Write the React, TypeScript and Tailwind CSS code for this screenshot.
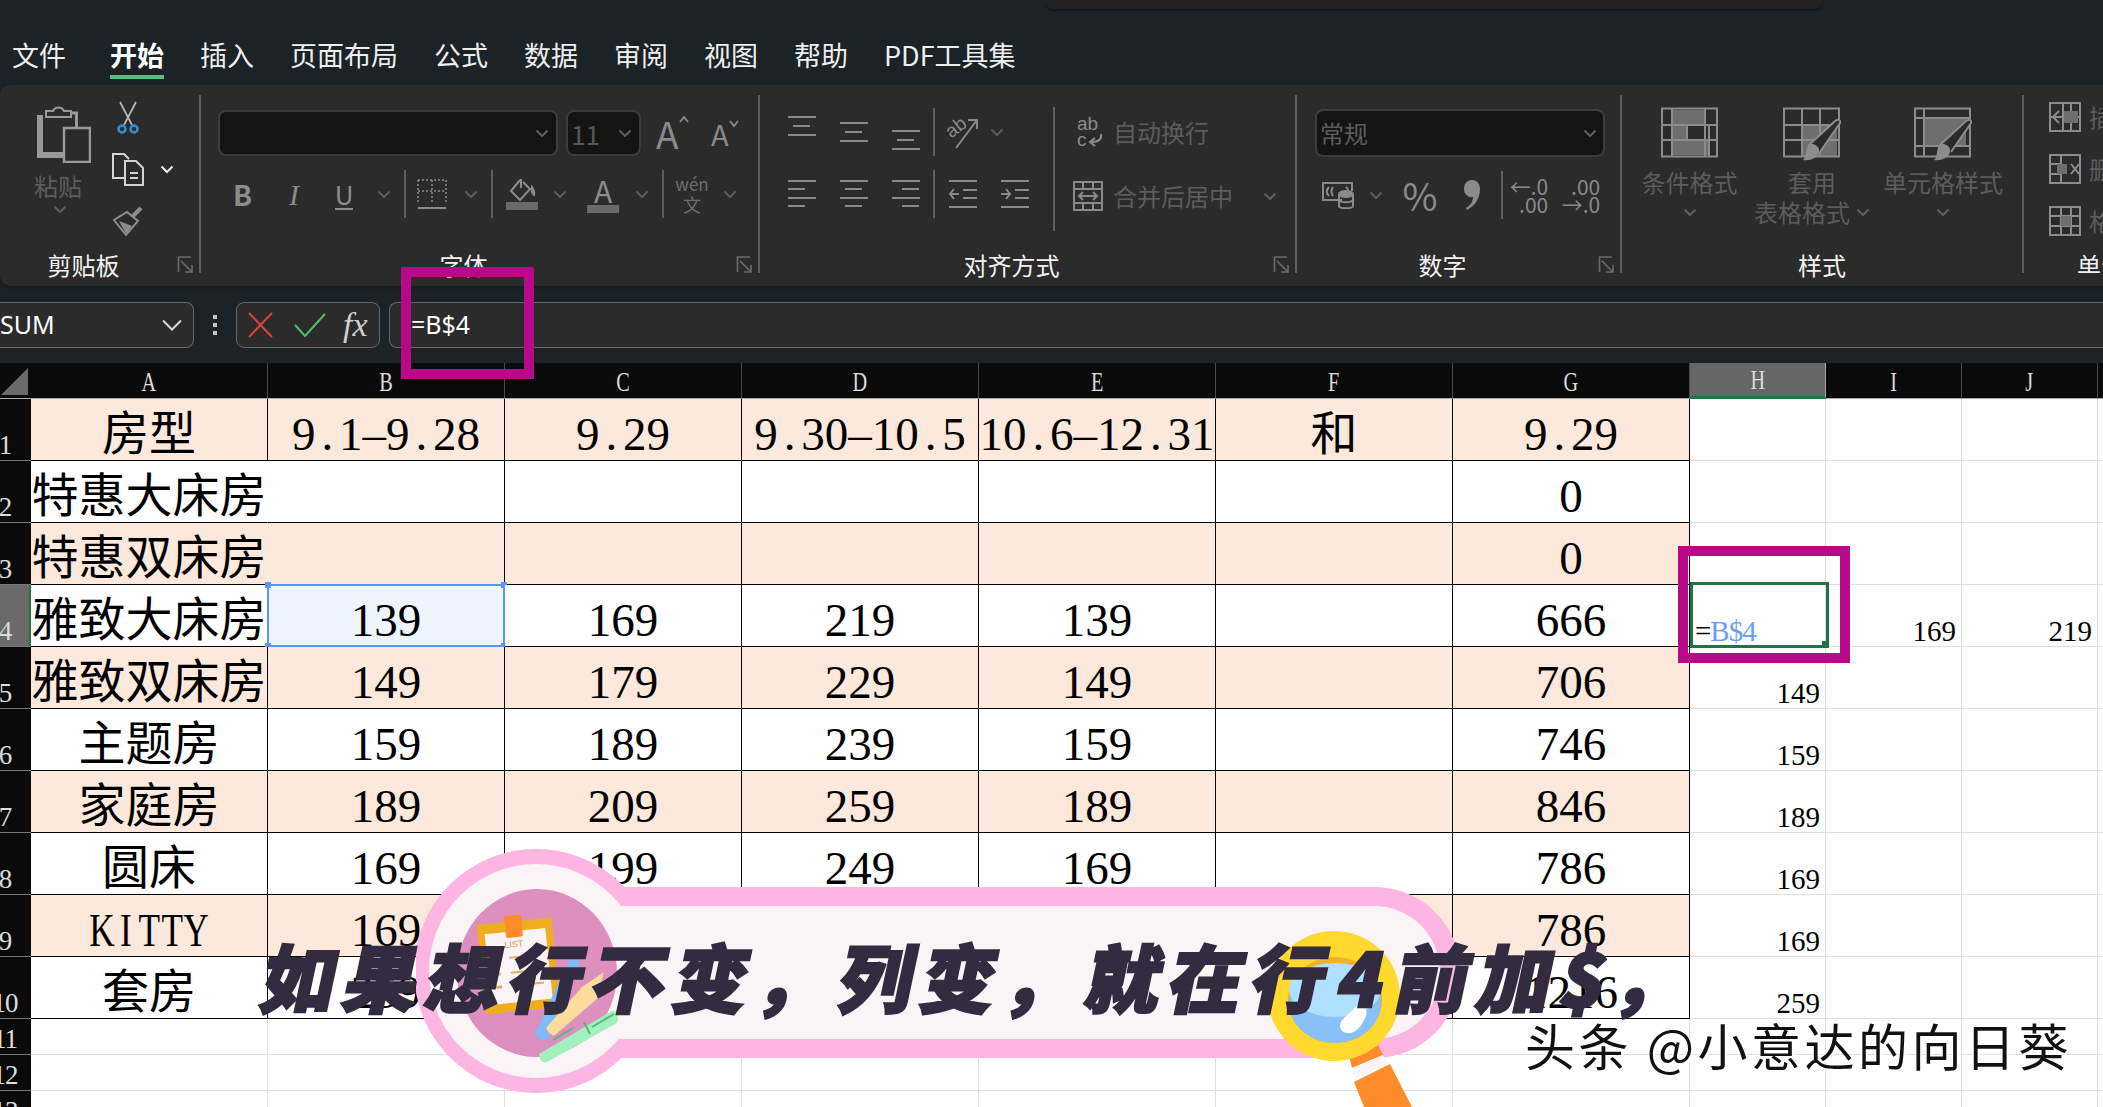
import React from 'react';

const tabs = ['文件', '开始', '插入', '页面布局', '公式', '数据', '审阅', '视图', '帮助', 'PDF工具集'];
const columns = ['A', 'B', 'C', 'D', 'E', 'F', 'G', 'H', 'I', 'J', ''];

interface Row {
  n: number;
  tint: boolean;
  cells: string[];
  side?: string;
}

const rows: Row[] = [
  { n: 1, tint: true, cells: ['房型', '9.1–9.28', '9.29', '9.30–10.5', '10.6–12.31', '和', '9.29'] },
  { n: 2, tint: false, cells: ['特惠大床房', '', '', '', '', '', '0'] },
  { n: 3, tint: true, cells: ['特惠双床房', '', '', '', '', '', '0'] },
  { n: 4, tint: false, cells: ['雅致大床房', '139', '169', '219', '139', '', '666'] },
  { n: 5, tint: true, cells: ['雅致双床房', '149', '179', '229', '149', '', '706'], side: '149' },
  { n: 6, tint: false, cells: ['主题房', '159', '189', '239', '159', '', '746'], side: '159' },
  { n: 7, tint: true, cells: ['家庭房', '189', '209', '259', '189', '', '846'], side: '189' },
  { n: 8, tint: false, cells: ['圆床', '169', '199', '249', '169', '', '786'], side: '169' },
  { n: 9, tint: true, cells: ['KITTY', '169', '199', '249', '169', '', '786'], side: '169' },
  { n: 10, tint: false, cells: ['套房', '259', '299', '399', '259', '', '1216'], side: '259' },
];

const Chev = ({ className = 'text-[#5e5e5e]' }: { className?: string }) => (
  <svg className={className} width="14" height="9" viewBox="0 0 14 9" fill="none">
    <path d="M1.5 1.5 7 7l5.5-5.5" stroke="currentColor" strokeWidth="2" />
  </svg>
);

const Slot = ({ className, children }: { className: string; children?: React.ReactNode }) => (
  <div className={`flex shrink-0 items-center justify-center ${className}`}>{children}</div>
);

const Sep = () => <div className="h-[48px] w-[2px] shrink-0 bg-[#5e5e5e]" />;

const Expander = () => (
  <svg className="absolute right-[6px] top-[6px]" width="16" height="18" viewBox="0 0 16 18" fill="none" stroke="#6a6a6a" strokeWidth="1.6">
    <path d="M14 1H1.5v15" />
    <path d="M4 5l10 10M15 9v7H8" />
  </svg>
);

// one group of the ribbon, the line on the right is its border
const Group = ({ className, label, more, children }: { className: string; label: string; more?: boolean; children: React.ReactNode }) => (
  <div className={`h-[178px] shrink-0 border-r-2 border-[#5e5e5e] ${className}`}>
    <div className="flex h-[155px] flex-col">{children}</div>
    <div className="relative h-[30px] text-center text-[24px] leading-[30px] text-[#f2f2f2]">
      <span className={more ? 'pr-[32px]' : ''}>{label}</span>
      {more && <Expander />}
    </div>
  </div>
);

const AlignLines = ({ kind }: { kind: 'left' | 'center' | 'right' }) => {
  const short = kind === 'left' ? 'M1 10h17M1 27h17' : kind === 'center' ? 'M6 10h17M6 27h17' : 'M11 10h17M11 27h17';
  return (
    <svg width="29" height="30" viewBox="0 0 29 30" stroke="#8a8a8a" strokeWidth="2">
      <path d="M1 2h28M1 19h28" />
      <path d={short} />
    </svg>
  );
};

const VAlign = ({ className }: { className: string }) => (
  <svg className={className} width="29" height="20" viewBox="0 0 29 20" stroke="#8a8a8a" strokeWidth="2">
    <path d="M1 1h28M6 10h17M1 19h28" />
  </svg>
);

const Indent = ({ out }: { out?: boolean }) => (
  <svg width="30" height="30" viewBox="0 0 30 30" fill="none" stroke="#8a8a8a" strokeWidth="2">
    <path d="M1 2h28M1 28h28M15 11h14M15 19h14" />
    {out ? <path d="M11 15H2M6 10l-4 5 4 5" /> : <path d="M1 15h9M6 10l4 5-4 5" />}
  </svg>
);

const StyleGrid = ({ brush, children }: { brush?: boolean; children: React.ReactNode }) => (
  <svg width="60" height="54" viewBox="0 0 60 54" fill="none">
    {children}
    {brush && (
      <>
        <path d="M27 38 52 15c3-3 7-3 6 1L38 45" fill="#2b2b2b" stroke="#8c8c8c" strokeWidth="2" />
        <path d="M27 37c6-1 11 3 10 8-1 6-9 9-16 8 4-3 2-12 6-16Z" fill="#8c8c8c" />
      </>
    )}
  </svg>
);

const CellIcon = ({ children }: { children: React.ReactNode }) => (
  <svg className="shrink-0" width="32" height="30" viewBox="0 0 32 30" fill="none" stroke="#8c8c8c" strokeWidth="2">
    <rect x="1" y="1" width="30" height="28" />
    {children}
  </svg>
);

function Ribbon() {
  return (
    <div className="flex h-[201px] rounded-l-[10px] bg-[#2b2b2b] pt-[10px] shadow-[0_1px_4px_rgba(0,0,0,0.4)]">
      <Group className="w-[201px]" label="剪贴板" more>
        <div className="flex pl-[37px]">
          <div className="flex w-[54px] flex-col items-center">
            <svg className="mt-[8px]" width="54" height="60" viewBox="0 0 54 60" fill="none" stroke="#9a9a9a">
              <path d="M3 12v40h23" strokeWidth="6" />
              <path d="M35 10h4.500v15" strokeWidth="3" />
              <path d="M9 14V8h7a6 6 0 0 1 11 0h7v6Z" strokeWidth="2" fill="#2b2b2b" />
              <rect x="27" y="25" width="26" height="34" strokeWidth="2.500" fill="#2b2b2b" />
            </svg>
            <span className="mt-[8px] ml-[-12px] text-[24px] leading-[30px] text-[#5c5c5c]">粘贴</span>
            <div className="mt-[4px] ml-[-8px]">
              <Chev />
            </div>
          </div>
          <div className="ml-[9px] flex flex-col gap-[5px]">
            <Slot className="h-[46px] w-[56px]">
              <svg width="24" height="34" viewBox="0 0 24 34" fill="none">
                <path d="M4 1l12 23M20 1 8 24" stroke="#b5b5b5" strokeWidth="1.800" />
                <circle cx="6" cy="28" r="3.500" stroke="#2f8fd8" strokeWidth="2.500" />
                <circle cx="18" cy="28" r="3.500" stroke="#2f8fd8" strokeWidth="2.500" />
              </svg>
            </Slot>
            <div className="flex h-[46px] items-center">
              <Slot className="w-[56px]">
                <svg width="33" height="33" viewBox="0 0 33 33" fill="none" stroke="#d4d4d4" strokeWidth="2">
                  <path d="M12 25H1V1h11l5 5" />
                  <path d="M13 8h11l7 7v17H13ZM18 20h8M18 25h8" />
                </svg>
              </Slot>
              <Slot className="w-[22px]">
                <Chev className="text-[#f0f0f0]" />
              </Slot>
            </div>
            <Slot className="h-[46px] w-[56px]">
              <svg width="33" height="31" viewBox="0 0 33 31" fill="none" stroke="#8c8c8c">
                <path d="M20 12l9-9" strokeWidth="4" />
                <path d="M15 7l11 9-12 14L2 15Z" strokeWidth="2" />
                <path d="M7 16l13 5-6 8Z" fill="#8c8c8c" stroke="none" />
              </svg>
            </Slot>
          </div>
        </div>
      </Group>

      <Group className="w-[559px]" label="字体" more>
        <div className="mt-[15px] flex h-[46px] items-center pl-[17px]">
          <div className="flex h-[46px] w-[340px] items-center justify-end rounded-[8px] border-2 border-[#3c3c3c] bg-[#141414] pr-[7px]">
            <Chev />
          </div>
          <div className="ml-[8px] flex h-[46px] w-[75px] items-center justify-between rounded-[8px] border-2 border-[#3c3c3c] bg-[#141414] pl-[3px] pr-[7px] text-[26px] text-[#585858]">
            11
            <Chev />
          </div>
          <div className="ml-[15px] flex w-[30px] items-start text-[37px] leading-[42px] text-[#8a8a8a]">
            A
            <svg className="mt-[3px] shrink-0" width="10" height="8" viewBox="0 0 10 8" fill="none" stroke="#8a8a8a" strokeWidth="1.800">
              <path d="M1 7l4-5 4 5" />
            </svg>
          </div>
          <div className="ml-[25px] flex w-[30px] items-start text-[29px] leading-[42px] text-[#8a8a8a]">
            A
            <svg className="mt-[8px] shrink-0" width="10" height="8" viewBox="0 0 10 8" fill="none" stroke="#8a8a8a" strokeWidth="1.800">
              <path d="M1 1l4 5 4-5" />
            </svg>
          </div>
        </div>
        <div className="mt-[14px] flex h-[48px] items-center pl-[17px]">
          <Slot className="w-[49px] text-[28px] font-bold text-[#8c8c8c]">B</Slot>
          <Slot className="w-[54px] font-['Liberation_Serif',serif] text-[30px] italic text-[#8c8c8c]">I</Slot>
          <Slot className="w-[46px] text-[26px] text-[#8c8c8c]">
            <span className="border-b-2 border-[#8c8c8c] leading-[29px]">U</span>
          </Slot>
          <Slot className="w-[34px]"><Chev /></Slot>
          <Slot className="w-[8px]"><Sep /></Slot>
          <Slot className="w-[46px]">
            <svg width="30" height="30" viewBox="0 0 30 30" fill="none" stroke="#8c8c8c" strokeWidth="1.500">
              <path d="M1 1h28M1 1v23M29 1v23M1 12h28M15 1v23" strokeDasharray="2 2" />
              <path d="M1 29h28" strokeWidth="2" />
            </svg>
          </Slot>
          <Slot className="w-[32px]"><Chev /></Slot>
          <Slot className="w-[10px]"><Sep /></Slot>
          <Slot className="w-[50px]">
            <svg width="32" height="32" viewBox="0 0 32 32" fill="none" stroke="#8c8c8c" strokeWidth="2">
              <path d="M14 2 5 13l9 9 10-11L17 4M15 1v9M26 9c2 3 3 5 2 8-2-2-3-4-2-8Z" />
              <rect x="0" y="24" width="32" height="8" fill="#6a6a6a" stroke="none" />
            </svg>
          </Slot>
          <Slot className="w-[26px]"><Chev /></Slot>
          <Slot className="w-[60px]">
            <div className="flex w-[32px] flex-col items-center text-[30px] leading-[28px] text-[#8c8c8c]">
              A
              <div className="mt-[1px] h-[8px] w-[32px] bg-[#6a6a6a]" />
            </div>
          </Slot>
          <Slot className="w-[18px]"><Chev /></Slot>
          <Slot className="w-[24px]"><Sep /></Slot>
          <Slot className="w-[34px] flex-col text-[#6e6e6e]">
            <span className="text-[17px] leading-[20px]">wén</span>
            <span className="text-[18px] leading-[20px]">文</span>
          </Slot>
          <Slot className="w-[42px]"><Chev /></Slot>
        </div>
      </Group>

      <Group className="w-[537px]" label="对齐方式" more>
        <div className="flex">
          <div className="mt-[12px] h-[124px] w-[295px] shrink-0 border-r-2 border-[#5e5e5e] pl-[15px]">
            <div className="mt-[2px] flex h-[46px] items-center">
              <Slot className="w-[52px]"><VAlign className="mb-[12px]" /></Slot>
              <Slot className="w-[52px]"><VAlign className="" /></Slot>
              <Slot className="w-[52px]"><VAlign className="mt-[16px]" /></Slot>
              <Slot className="w-[6px]"><Sep /></Slot>
              <Slot className="w-[52px]">
                <svg width="34" height="34" viewBox="0 0 34 34" fill="none" stroke="#8a8a8a" strokeWidth="2">
                  <text x="1" y="19" transform="rotate(-38 10 15)" fill="#8a8a8a" stroke="none" fontSize="19" fontFamily="'Liberation Sans', sans-serif">ab</text>
                  <path d="M10 33 31 5M22 5h9v9" />
                </svg>
              </Slot>
              <Slot className="w-[16px]"><Chev /></Slot>
            </div>
            <div className="mt-[16px] flex h-[46px] items-center">
              <Slot className="w-[52px]"><AlignLines kind="left" /></Slot>
              <Slot className="w-[52px]"><AlignLines kind="center" /></Slot>
              <Slot className="w-[52px]"><AlignLines kind="right" /></Slot>
              <Slot className="w-[6px]"><Sep /></Slot>
              <Slot className="w-[52px]"><Indent out /></Slot>
              <Slot className="w-[52px]"><Indent /></Slot>
            </div>
          </div>
          <div className="mt-[14px] pl-[18px] text-[24px] text-[#5c5c5c]">
            <div className="flex h-[46px] items-center gap-[10px]">
              <svg width="30" height="34" viewBox="0 0 30 34" fill="none" stroke="#8a8a8a" strokeWidth="2">
                <text x="4" y="15" fill="#8a8a8a" stroke="none" fontSize="19" fontFamily="'Liberation Sans', sans-serif">ab</text>
                <text x="4" y="31" fill="#8a8a8a" stroke="none" fontSize="19" fontFamily="'Liberation Sans', sans-serif">c</text>
                <path d="M28 19c1 5-2 8-10 8M22 23l-5 4 5 4" />
              </svg>
              自动换行
            </div>
            <div className="mt-[18px] flex h-[46px] items-center gap-[10px]">
              <svg width="30" height="30" viewBox="0 0 30 30" fill="none" stroke="#8a8a8a" strokeWidth="2">
                <rect x="1" y="1" width="28" height="28" />
                <path d="M1 8h28M1 22h28M10 1v7M20 1v7M10 22v7M20 22v7M6 15h18M10 11l-4 4 4 4M20 11l4 4-4 4" />
              </svg>
              合并后居中
              <div className="ml-[20px]"><Chev /></div>
            </div>
          </div>
        </div>
      </Group>

      <Group className="w-[325px]" label="数字" more>
        <div className="ml-[18px] mt-[14px] flex h-[48px] w-[290px] items-center justify-between rounded-[8px] border-2 border-[#3c3c3c] bg-[#141414] pl-[3px] pr-[6px] text-[24px] text-[#5c5c5c]">
          常规
          <Chev />
        </div>
        <div className="mt-[14px] flex h-[48px] items-center pl-[25px]">
          <Slot className="w-[33px]">
            <svg width="33" height="27" viewBox="0 0 33 27" fill="none" stroke="#8a8a8a" strokeWidth="2">
              <path d="M20 18H1V1h29v8M7 5C4 8 4 11 7 14M11 5c-2 3-2 6 0 9M24 5c1 1 2 2 2 3" />
              <ellipse cx="24" cy="12" rx="7" ry="3" fill="#8a8a8a" />
              <path d="M17 12v12c0 3 14 3 14 0V12M17 18c2 3 12 3 14 0" />
            </svg>
          </Slot>
          <Slot className="w-[42px]"><Chev /></Slot>
          <Slot className="w-[46px] text-[38px] leading-[48px] text-[#8a8a8a]">%</Slot>
          <Slot className="w-[58px]">
            <svg width="16" height="30" viewBox="0 0 16 30" fill="#8a8a8a">
              <path d="M8 0c5 0 8 4 8 9 0 9-5 17-13 21l-1-2c5-3 7-7 7-11-5 1-9-3-9-8S3 0 8 0Z" />
            </svg>
          </Slot>
          <Sep />
          <Slot className="w-[52px]">
            <div className="flex flex-col items-end text-[21px] leading-[18px] text-[#8a8a8a]">
              <span>←.0</span>
              <span>.00</span>
            </div>
          </Slot>
          <Slot className="w-[52px]">
            <div className="flex flex-col items-end text-[21px] leading-[18px] text-[#8a8a8a]">
              <span>.00</span>
              <span>→.0</span>
            </div>
          </Slot>
        </div>
      </Group>

      <Group className="w-[402px]" label="样式">
        <div className="flex text-[24px] leading-[30px] text-[#5c5c5c]">
          <div className="flex w-[135px] flex-col items-center pt-[12px]">
            <StyleGrid>
              <rect x="12" y="3" width="33" height="14" fill="#6e6e6e" />
              <rect x="12" y="19" width="15" height="14" fill="#6e6e6e" />
              <rect x="12" y="34" width="37" height="14" fill="#6e6e6e" />
              <path d="M2 1.500h55v48H2ZM12 1.500v48M45 1.500v48M2 18h55M2 33h55M27 18v15M49 18v32" stroke="#8c8c8c" strokeWidth="2" />
            </StyleGrid>
            <span className="mt-[6px]">条件格式</span>
            <div className="h-[30px] pt-[11px]"><Chev /></div>
          </div>
          <div className="flex w-[110px] flex-col items-center pt-[12px]">
            <StyleGrid brush>
              <path d="M20 18h35v32H20Z" fill="#6e6e6e" />
              <path d="M2 1.500h55v48H2ZM2 18h55M2 33h55M20 1.500v48M38 1.500v48" stroke="#8c8c8c" strokeWidth="2" />
            </StyleGrid>
            <span className="mt-[6px]">套用</span>
            <div className="flex h-[30px] items-center gap-[6px] whitespace-nowrap">
              表格格式
              <Chev />
            </div>
          </div>
          <div className="flex w-[152px] flex-col items-center pt-[12px]">
            <StyleGrid brush>
              <path d="M11 11h42v28H11Z" fill="#6e6e6e" />
              <path d="M2 1.500h55v48H2ZM2 11h55M2 39h55M11 1.500v48" stroke="#8c8c8c" strokeWidth="2" />
            </StyleGrid>
            <span className="mt-[6px]">单元格样式</span>
            <div className="h-[30px] pt-[11px]"><Chev /></div>
          </div>
        </div>
      </Group>

      <div className="h-[178px] flex-1 overflow-hidden">
        <div className="flex h-[155px] flex-col gap-[8px] whitespace-nowrap pl-[25px] text-[24px] text-[#5c5c5c]">
          <div className="flex h-[44px] items-center gap-[8px]">
            <CellIcon>
              <path d="M1 15h30M14 1v28M22 1v28M10 9l-6 6 6 6" />
              <rect x="15" y="9" width="14" height="12" fill="#6e6e6e" stroke="none" />
            </CellIcon>
            插入
          </div>
          <div className="flex h-[44px] items-center gap-[8px]">
            <CellIcon>
              <path d="M1 10h12M1 20h12M12 1v28M22 10l8 10M30 10l-8 10" />
              <rect x="8" y="10" width="10" height="10" fill="#6e6e6e" stroke="none" />
            </CellIcon>
            删除
          </div>
          <div className="flex h-[44px] items-center gap-[8px]">
            <CellIcon>
              <path d="M1 10h30M1 20h30M12 1v28M22 1v28" />
              <rect x="12" y="10" width="10" height="10" fill="#6e6e6e" stroke="none" />
            </CellIcon>
            格式
          </div>
        </div>
        <div className="whitespace-nowrap pl-[53px] text-[24px] leading-[30px] text-[#f2f2f2]">单元格</div>
      </div>
    </div>
  );
}

function FormulaBar() {
  return (
    <div className="mt-[16px] flex h-[46px] items-stretch">
      <div className="flex w-[194px] items-center justify-between rounded-r-[8px] border border-l-0 border-[#666] bg-[#2b2b2b] pr-[11px] font-['Noto_Sans',sans-serif] text-[25px] text-white">
        SUM
        <svg width="20" height="12" viewBox="0 0 20 12" fill="none" stroke="#d8d8d8" strokeWidth="2">
          <path d="M1 1.500l9 9 9-9" />
        </svg>
      </div>
      <div className="flex w-[42px] flex-col items-center justify-center gap-[4px]">
        <div className="h-[4px] w-[4px] bg-[#c4c4c4]" />
        <div className="h-[4px] w-[4px] bg-[#c4c4c4]" />
        <div className="h-[4px] w-[4px] bg-[#c4c4c4]" />
      </div>
      <div className="flex w-[144px] items-center rounded-[8px] border border-[#666] bg-[#2b2b2b] pl-[11px]">
        <svg width="25" height="26" viewBox="0 0 25 26" fill="none" stroke="#e0403f" strokeWidth="2">
          <path d="M1 1l23 24M24 1 1 25" />
        </svg>
        <svg className="ml-[21px]" width="32" height="24" viewBox="0 0 32 24" fill="none" stroke="#4fc06a" strokeWidth="2">
          <path d="M1 12l10 11L31 1" />
        </svg>
        <span className="ml-[17px] font-['Liberation_Serif',serif] text-[34px] italic leading-none text-[#d0d0d0]">fx</span>
      </div>
      <div className="ml-[9px] flex flex-1 items-center rounded-l-[8px] border border-r-0 border-[#666] bg-[#2b2b2b] pl-[21px] font-['Noto_Sans',sans-serif] text-[25px] text-white">
        =B$4
      </div>
    </div>
  );
}

// the sheet's font has half-width latin and digits, so every char gets its own box
const SheetText = ({ text }: { text: string }) => (
  <span className="flex whitespace-nowrap">
    {text.split('').map((ch, i) => {
      const wide = ch.charCodeAt(0) > 0x2fff;
      const letter = /[A-Z]/.test(ch);
      return (
        <span key={i} className={`flex justify-center ${wide ? 'w-[47px]' : 'w-[23.5px]'}`}>
          <span className={letter ? 'inline-block scale-x-[0.75]' : ''}>{ch}</span>
        </span>
      );
    })}
  </span>
);

const darkCell = 'flex items-end justify-center border-b border-r border-black pb-[2px] text-[47px] leading-[47px] text-black';
const lightCell = 'flex items-end justify-end border-b border-r border-[#dedede] bg-white pr-[5px] text-[29px] leading-[29px] text-black';

function Sheet() {
  return (
    <div className="grid flex-1 grid-cols-[31px_repeat(7,237px)_136px_136px_136px_1fr] overflow-hidden bg-white font-['Liberation_Serif','Noto_Sans_CJK_SC',serif] [grid-auto-rows:min-content]">
      <div className="flex h-[36px] items-end justify-end border-b border-[#aaa] bg-[#0a0a0a] pb-[3px] pr-[3px]">
        <svg width="27" height="27" viewBox="0 0 27 27">
          <path d="M27 0v27H0Z" fill="#6a6a6a" />
        </svg>
      </div>
      {columns.map((c, i) => (
        <div
          key={i}
          className={`flex h-[36px] items-end justify-center pb-[2px] text-[27px] leading-[27px] text-[#dcdcdc] ${
            c === 'H'
              ? 'border-b-[3px] border-r border-b-[#217346] border-r-[#aaa] bg-[#666]'
              : 'border-b border-r border-b-[#aaa] border-r-[#4a4a4a] bg-[#0a0a0a]'
          }`}
        >
          <span className="inline-block scale-x-[0.75]">{c}</span>
        </div>
      ))}

      {rows.map((row) => (
        <React.Fragment key={row.n}>
          <RowHead n={row.n} className="h-[62px]" active={row.n === 4} />
          {row.cells.map((cell, i) => {
            const merged = i === 0 && (row.n === 2 || row.n === 3);
            const selected = i === 1 && row.n === 4;
            return (
              <div
                key={i}
                className={`relative ${darkCell} ${selected ? 'bg-[#eef5ff]' : row.tint ? 'bg-[#fce9db]' : 'bg-white'} ${merged ? 'border-r-transparent' : ''}`}
              >
                {cell && <SheetText text={cell} />}
                {selected && (
                  <div className="absolute -inset-[1px] border-2 border-[#5b96f7]">
                    <div className="absolute -left-[4px] -top-[4px] h-[6px] w-[6px] bg-[#5b96f7]" />
                    <div className="absolute -right-[4px] -top-[4px] h-[6px] w-[6px] bg-[#5b96f7]" />
                    <div className="absolute -bottom-[4px] -left-[4px] h-[6px] w-[6px] bg-[#5b96f7]" />
                    <div className="absolute -bottom-[4px] -right-[4px] h-[6px] w-[6px] bg-[#5b96f7]" />
                  </div>
                )}
              </div>
            );
          })}
          {row.n === 4 ? (
            <div className={`relative justify-start pl-[5px] tracking-[-1px] ${lightCell}`}>
              =<span className="text-[#6b9dff]">B$4</span>
              <div className="absolute -top-[3px] left-0 h-[66px] w-[139px] border-[3px] border-[#217346]">
                <div className="absolute -bottom-[3px] -right-[3px] h-[7px] w-[7px] bg-[#217346]" />
              </div>
            </div>
          ) : (
            <div className={lightCell}>{row.side}</div>
          )}
          <div className={lightCell}>{row.n === 4 ? '169' : ''}</div>
          <div className={lightCell}>{row.n === 4 ? '219' : ''}</div>
          <div className={lightCell} />
        </React.Fragment>
      ))}

      {[11, 12, 13].map((n) => (
        <React.Fragment key={n}>
          <RowHead n={n} className="h-[36px]" />
          {columns.map((_, i) => (
            <div key={i} className="border-b border-r border-[#dedede] bg-white" />
          ))}
        </React.Fragment>
      ))}
    </div>
  );
}

const RowHead = ({ n, className, active }: { n: number; className: string; active?: boolean }) => (
  <div
    className={`flex items-end overflow-hidden border-b border-[#777] pb-[1px] text-[27px] leading-[27px] text-[#dcdcdc] ${className} ${
      active ? 'border-r-2 border-r-[#217346] bg-[#6a6a6a]' : 'bg-[#0a0a0a]'
    }`}
  >
    <div className="flex w-[10px] justify-center tracking-[-1px]">{n}</div>
  </div>
);

function Sticker() {
  return (
    <svg className="absolute left-[416px] top-[849px]" width="1050" height="258" viewBox="416 849 1050 258">
      <circle cx="536" cy="971" r="122" fill="#fdb5e2" />
      <rect x="536" y="887" width="924" height="171" rx="85" fill="#fdb5e2" />
      <circle cx="536" cy="971" r="107" fill="#fbf4f7" />
      <rect x="536" y="906" width="904" height="133" rx="66" fill="#fbf4f7" />
      <ellipse cx="537" cy="973" rx="80" ry="84" fill="#dd8fbe" />

      <g transform="rotate(-6 518 965)">
        <rect x="481" y="921" width="75" height="90" fill="#efae22" />
        <rect x="488" y="931" width="61" height="71" fill="#fbf4f7" />
        <rect x="509" y="915" width="17" height="22" rx="2" fill="#ff8c2b" />
        <text x="516" y="947" textAnchor="middle" fontSize="9" fill="#c99a55" fontFamily="'Liberation Sans', sans-serif">LIST</text>
        <path d="M510 957h32M510 972h32M510 985h32" stroke="#e0b060" strokeWidth="2" />
        <path d="M494 957h6M494 972h6M494 985h6" stroke="#e0b060" strokeWidth="3" />
      </g>

      <path d="M570 958c5-3 10 0 9 6l-29 72c-2 5-10 5-14 0-1-1-1-3 0-4Z" fill="#7fbbfa" />
      <path d="M604 972l-7 27-42 36c-3 2-8-4-9-7l36-41Z" fill="#fddc9e" />
      <path d="M539 1054l71-42c4-3 7 0 8 6 0 3-1 5-3 6l-68 38c-3 1-5 0-7-3Z" fill="#a3f0bf" />
      <path d="M553 1040l20-12M584 1022l6 12M592 1027l22-13" stroke="#55b877" strokeWidth="2" fill="none" />

      <path d="M1349 1056l29-11 5 10-31 13Z" fill="#ff8c2b" />
      <path d="M1352 1068l31-13 5 9-33 14Z" fill="#fbf4f7" />
      <path d="M1354 1082l36-18 22 43h-48Z" fill="#ff8c2b" />
      <ellipse cx="1334" cy="996" rx="66" ry="65" fill="#ffd92e" />
      <ellipse cx="1335" cy="1000" rx="47" ry="43" fill="#efb02a" />
      <ellipse cx="1335" cy="1003" rx="46" ry="40" fill="#88c0fa" />
      <ellipse cx="1335" cy="990" rx="46" ry="27" fill="#b0e0ff" />
      <path d="M1358 1005c6-4 10 4 8 11-4 10-11 19-20 17-7-2-7-8-4-13Z" fill="#fff" />
    </svg>
  );
}

export default function App() {
  return (
    <div className="relative flex h-[1107px] w-[2103px] flex-col overflow-hidden bg-[#1c2327] font-['Noto_Sans_CJK_SC',sans-serif]">
      <div className="ml-[1046px] h-[9px] w-[776px] rounded-b-[6px] bg-[#222020] shadow-[0_1px_3px_rgba(0,0,0,0.5)]" />
      <div className="flex h-[76px] gap-[36px] pl-[12px] pt-[26px] text-[27px] leading-[40px] text-[#eeeeee]">
        {tabs.map((t) => (
          <div key={t} className={t === '开始' ? 'ml-[8px] h-[44px] border-b-4 border-[#5dbb82] font-bold text-white' : ''}>
            {t}
          </div>
        ))}
      </div>

      <Ribbon />
      <FormulaBar />
      <div className="mt-[15px] flex min-h-0 flex-1">
        <Sheet />
      </div>

      <div className="absolute left-[401px] top-[267px] h-[112px] w-[133px] border-[10px] border-[#b80a88]" />
      <div className="absolute left-[1678px] top-[546px] h-[117px] w-[172px] border-[10px] border-[#b80a88]" />

      <Sticker />
      <div className="absolute left-[264px] top-[930px] -skew-x-12 whitespace-nowrap text-[74px] font-black leading-[90px] tracking-[8.5px] text-[#332b3f] [-webkit-text-stroke:2.5px_#332b3f]">
        如果想行不变，列变，就在行<span className="mx-[4px]">4</span>前加$，
      </div>
      <div className="absolute left-[1525px] top-[1008px] whitespace-nowrap text-[50px] leading-[72px] tracking-[3.5px] text-[#111] [text-shadow:2px_2px_0_#fff,-1px_-1px_0_#fff]">
        头条 @小意达的向日葵
      </div>
    </div>
  );
}
